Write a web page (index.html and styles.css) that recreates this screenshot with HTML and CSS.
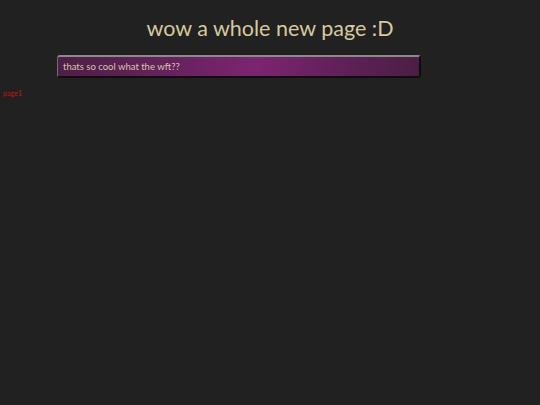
FILE: index.html
```html
<!DOCTYPE html>
<html>
<head>
<meta charset="utf-8">
<link rel="stylesheet" href="styles.css">
</head>
<body>
<h1 class="title">wow a whole new page :D</h1>
<div class="note">thats so cool what the wft??</div>
<div class="page-label">page1</div>
</body>
</html>
```
FILE: styles.css
```css
html, body {
  margin: 0;
  padding: 0;
  background: #212121;
  width: 540px;
  height: 405px;
  overflow: hidden;
}
body {
  font-family: "Lato", "Open Sans", sans-serif;
}
.title {
  margin: 0;
  padding-top: 13px;
  text-align: center;
  font-family: "Lato", sans-serif;
  font-size: 21.5px;
  font-weight: 400;
  color: #d6c99c;
  line-height: 30px;
}
.note {
  margin: 12px 0 0 57px;
  width: 356px;
  height: 19px;
  line-height: 19px;
  padding: 0 0 0 5px;
  box-sizing: content-box;
  border-top: 2px solid #8a8a8a;
  border-left: 1px solid #6e6e6e;
  border-right: 2px solid #0e0e0e;
  border-bottom: 2px solid #0e0e0e;
  border-radius: 3px;
  background: linear-gradient(90deg, #4d1f45 0%, #6a2260 35%, #7d2470 55%, #64215c 75%, #4a1f42 100%);
  color: #d8c4b0;
  font-family: "Lato", sans-serif;
  font-size: 9.5px;
}
.page-label {
  margin: 10px 0 0 3px;
  color: #c01414;
  font-family: "Lato", sans-serif;
  font-size: 7px;
  line-height: 10px;
}
```
